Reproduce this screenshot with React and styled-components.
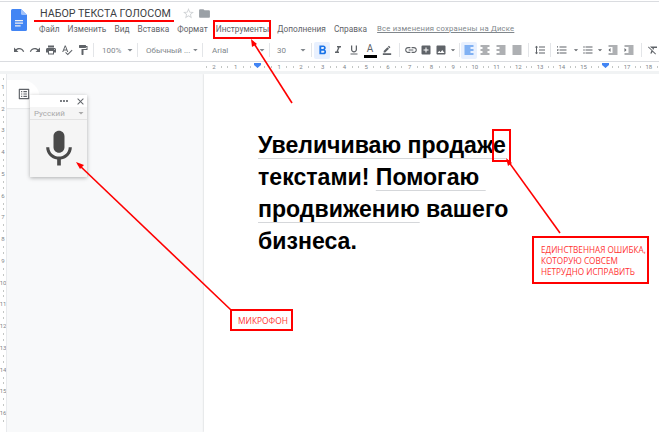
import React from 'react';
import styled, { createGlobalStyle } from 'styled-components';
import {
  MdUndo, MdRedo, MdPrint, MdSpellcheck, MdFormatPaint, MdFormatBold, MdFormatItalic,
  MdFormatUnderlined, MdBorderColor, MdLink, MdAddBox, MdImage, MdFormatAlignLeft,
  MdFormatAlignCenter, MdFormatAlignRight, MdFormatAlignJustify, MdFormatLineSpacing,
  MdFormatListNumbered, MdFormatListBulleted, MdFormatIndentDecrease, MdFormatIndentIncrease,
  MdFormatClear, MdStarBorder, MdFolder, MdMic, MdClose, MdMoreHoriz, MdArrowDropDown,
  MdOutlineListAlt,
} from 'react-icons/md';

const GlobalStyle = createGlobalStyle`
  html, body {
    margin: 0;
    padding: 0;
    background: #fff;
    overflow: hidden;
  }
`;

const Page = styled.div`
  position: relative;
  width: 659px;
  height: 432px;
  overflow: hidden;
  display: flex;
  flex-direction: column;
  font-family: Roboto, "Liberation Sans", sans-serif;
  color: #3c4043;
`;

const Header = styled.header`
  height: 38px;
  flex: none;
  display: flex;
  margin-top: 1px;
  border-top: 1px solid #dadce0;
  box-sizing: border-box;
`;

const LogoBox = styled.div`
  width: 39px;
  flex: none;
  padding: 7px 0 0 11px;
  box-sizing: border-box;
`;

const HeaderMain = styled.div`
  display: flex;
  flex-direction: column;
`;

const TitleRow = styled.div`
  display: flex;
  align-items: center;
  height: 20px;
  padding: 3px 0 0 1px;
  box-sizing: border-box;
  color: #d0d3d6;
`;

const Title = styled.span`
  font-size: 10.7px;
  color: #3c4043;
  width: 142px;
  white-space: nowrap;
`;

const MenuRow = styled.nav`
  display: flex;
  align-items: center;
  gap: 8.1px;
  height: 13px;
  font-size: 8.3px;
  color: #5f6368;
  white-space: nowrap;
`;

const SaveStatus = styled.span`
  margin-left: 2px;
  font-size: 7.7px;
  letter-spacing: 0.2px;
  color: #80868b;
  text-decoration: underline;
`;

const Toolbar = styled.div`
  height: 23px;
  flex: none;
  display: flex;
  align-items: center;
  padding-left: 11px;
  color: #5f6368;
  border-bottom: 1px solid #dadce0;
  box-sizing: border-box;
`;

const ToolCell = styled.div`
  width: ${(p) => p.$w}px;
  height: 17px;
  flex: none;
  display: flex;
  align-items: center;
  justify-content: center;
  border-radius: 2px;
  background: ${(p) => (p.$active ? '#e8f0fe' : 'transparent')};
  color: ${(p) => (p.$active ? '#1a73e8' : 'inherit')};
`;

const ToolSep = styled.div`
  width: 1px;
  height: 14px;
  flex: none;
  margin: 0 ${(p) => p.$gap || 4}px;
  background: #e3e5e8;
`;

const ToolText = styled.div`
  width: ${(p) => p.$w}px;
  flex: none;
  display: flex;
  align-items: center;
  justify-content: space-between;
  padding-left: ${(p) => p.$pad || 0}px;
  box-sizing: border-box;
  font-size: 8px;
  color: #80868b;
  white-space: nowrap;
`;

const ColorA = styled.div`
  width: 16px;
  flex: none;
  display: flex;
  flex-direction: column;
  align-items: center;
  font-size: 10px;
  line-height: 10px;
  margin-top: 1px;
  color: #5f6368;
  &::after {
    content: '';
    width: 13px;
    height: 3px;
    margin-top: 1px;
    background: #000;
  }
`;

const HRuler = styled.div`
  height: 12px;
  flex: none;
  display: flex;
  align-items: center;
  padding-left: 203px;
  background: linear-gradient(#fff 0 9px, #f1f3f4 9px);
  font-size: 6px;
  color: #80868b;
  position: relative;
`;

const RulerCell = styled.div`
  width: 21.75px;
  height: 9px;
  margin-bottom: 3px;
  flex: none;
  display: flex;
  align-items: center;
  justify-content: space-around;
  color: #80868b;
`;

const RulerTick = styled.i`
  width: 1px;
  height: 2px;
  background: #c4c7c5;
`;

const IndentMark = styled.div`
  position: absolute;
  top: 1px;
  left: ${(p) => p.$x}px;
  width: 7px;
  height: 5px;
  background: #4285f4;
  clip-path: polygon(0 0, 100% 0, 100% 40%, 50% 100%, 0 40%);
`;

const Workspace = styled.div`
  flex: 1;
  min-height: 0;
  display: flex;
  background: #f8f9fa;
`;

const VRuler = styled.div`
  width: 6px;
  flex: none;
  background: #fff;
  border-right: 1px solid #e8eaed;
  overflow: hidden;
  font-size: 6px;
  color: #80868b;
`;

const VRulerCell = styled.div`
  height: 21.75px;
  display: flex;
  flex-direction: column;
  align-items: center;
  justify-content: space-around;
  line-height: 6px;
  &:first-child {
    margin-top: 2px;
  }
  b {
    font-weight: 400;
  }
`;

const LeftPane = styled.div`
  width: 197px;
  flex: none;
  padding-top: 6px;
  position: relative;
`;

const OutlineTab = styled.div`
  width: 33px;
  height: 28px;
  background: #fff;
  border-radius: 0 18px 0 0;
  box-shadow: 0 1px 1px rgba(60, 64, 67, 0.08);
  display: flex;
  align-items: center;
  justify-content: center;
  color: #5f6368;
`;

const MicWidget = styled.aside`
  position: absolute;
  left: 23px;
  top: 21px;
  width: 57px;
  height: 82px;
  background: #f5f5f5;
  box-shadow: 0 1px 4px rgba(0, 0, 0, 0.3);
  display: flex;
  flex-direction: column;
`;

const MicHeader = styled.div`
  height: 12px;
  background: #fff;
  display: flex;
  align-items: center;
  justify-content: flex-end;
  gap: 5px;
  padding-right: 1px;
  color: #5f6368;
`;

const MicLang = styled.div`
  height: 12px;
  display: flex;
  align-items: center;
  justify-content: space-between;
  padding-left: 4px;
  font-size: 8px;
  color: #a9a9a9;
  border-bottom: 1px solid #e3e3e3;
`;

const MicBody = styled.div`
  flex: 1;
  display: flex;
  align-items: center;
  justify-content: center;
  color: #4a4a4a;
`;

const Sheet = styled.main`
  flex: 1;
  background: #fff;
  box-shadow: 0 0 2px rgba(60, 64, 67, 0.25);
  padding: 55px 0 0 54px;
  font-family: "Liberation Sans", Arial, sans-serif;
  font-weight: 700;
  font-size: 23.1px;
  line-height: 32px;
  color: #000;
`;

const DocLine = styled.div`
  white-space: nowrap;
`;

const Marked = styled.span`
  text-decoration: underline;
  text-decoration-color: #d5d7da;
  text-decoration-thickness: 1px;
  text-underline-offset: 5px;
  text-decoration-skip-ink: none;
`;

const Arrows = styled.svg`
  position: absolute;
  left: 0;
  top: 0;
  pointer-events: none;
`;

const TitleUnderline = styled.div`
  position: absolute;
  left: 34px;
  top: 20px;
  width: 140px;
  height: 2px;
  background: #f00;
`;

const MenuHighlight = styled.div`
  position: absolute;
  left: 213px;
  top: 20px;
  width: 58px;
  height: 19px;
  box-sizing: border-box;
  border: 2px solid #f00;
`;

const LetterHighlight = styled.div`
  position: absolute;
  left: 492px;
  top: 129px;
  width: 19px;
  height: 33px;
  box-sizing: border-box;
  border: 2px solid #f00;
`;

const Note = styled.div`
  position: absolute;
  box-sizing: border-box;
  background: #fff;
  border: 2px solid #f00;
  color: #f33;
  font-family: "Open Sans", "Liberation Sans", sans-serif;
  white-space: nowrap;
`;

const ErrorNote = styled(Note)`
  left: 532px;
  top: 236px;
  width: 117px;
  height: 48px;
  padding: 6px 0 0 7px;
  font-size: 8.2px;
  line-height: 11px;
`;

const MicNote = styled(Note)`
  left: 230px;
  top: 309px;
  width: 63px;
  height: 22px;
  padding-left: 6px;
  display: flex;
  align-items: center;
  font-size: 8.4px;
`;

const DocsLogo = () => (
  <svg width="16" height="22" viewBox="0 0 16 22">
    <path d="M1.5 0H10l6 6v14.5a1.5 1.5 0 0 1-1.5 1.5h-13A1.5 1.5 0 0 1 0 20.5v-19A1.5 1.5 0 0 1 1.5 0z" fill="#4285f4" />
    <path d="M10 0l6 6h-4.5A1.5 1.5 0 0 1 10 4.5z" fill="#a1c2fa" />
    <path d="M4 11h8v1.2H4zM4 13.6h8v1.2H4zM4 16.2h5.6v1.2H4z" fill="#f1f1f1" />
  </svg>
);

const menuItems = ['Файл', 'Изменить', 'Вид', 'Вставка', 'Формат', 'Инструменты', 'Дополнения', 'Справка'];

const Tool = ({ icon: Icon, w = 16, size = 12, active }) => (
  <ToolCell $w={w} $active={active}><Icon size={size} /></ToolCell>
);

const hRuler = [2, 1, null, 1, 2, 3, 4, 5, 6, 7, 8, 9, 10, 11, 12, 13, 14, 15, null, 17, 18];

export default function App() {
  return (
    <Page>
      <GlobalStyle />
      <Header>
        <LogoBox><DocsLogo /></LogoBox>
        <HeaderMain>
          <TitleRow>
            <Title>НАБОР ТЕКСТА ГОЛОСОМ</Title>
            <MdStarBorder size={13} />
            <MdFolder size={13} style={{ marginLeft: 3, color: '#9aa0a6' }} />
          </TitleRow>
          <MenuRow>
            {menuItems.map((m) => <span key={m}>{m}</span>)}
            <SaveStatus>Все изменения сохранены на Диске</SaveStatus>
          </MenuRow>
        </HeaderMain>
      </Header>

      <Toolbar>
        <Tool icon={MdUndo} />
        <Tool icon={MdRedo} />
        <Tool icon={MdPrint} />
        <Tool icon={MdSpellcheck} />
        <Tool icon={MdFormatPaint} />
        <ToolSep $gap={2} />
        <ToolText $w={40} $pad={6}>100% <MdArrowDropDown size={12} /></ToolText>
        <ToolSep $gap={1} />
        <ToolText $w={62} $pad={7}>Обычный ... <MdArrowDropDown size={12} /></ToolText>
        <ToolSep $gap={1} />
        <ToolText $w={64} $pad={8}>Arial <MdArrowDropDown size={12} /></ToolText>
        <ToolSep $gap={1} />
        <ToolText $w={38} $pad={6}>30 <MdArrowDropDown size={12} /></ToolText>
        <ToolSep $gap={2} />
        <Tool icon={MdFormatBold} active size={15} />
        <Tool icon={MdFormatItalic} />
        <Tool icon={MdFormatUnderlined} />
        <ColorA>A</ColorA>
        <Tool icon={MdBorderColor} w={18} size={10} />
        <ToolSep $gap={3} />
        <Tool icon={MdLink} w={15} size={14} />
        <Tool icon={MdAddBox} />
        <Tool icon={MdImage} w={14} />
        <MdArrowDropDown size={10} />
        <ToolSep $gap={1} />
        <Tool icon={MdFormatAlignLeft} active />
        <Tool icon={MdFormatAlignCenter} />
        <Tool icon={MdFormatAlignRight} />
        <Tool icon={MdFormatAlignJustify} />
        <ToolSep $gap={3} />
        <Tool icon={MdFormatLineSpacing} />
        <ToolSep $gap={2} />
        <Tool icon={MdFormatListNumbered} w={18} />
        <MdArrowDropDown size={10} />
        <Tool icon={MdFormatListBulleted} w={14} />
        <MdArrowDropDown size={10} />
        <Tool icon={MdFormatIndentDecrease} />
        <Tool icon={MdFormatIndentIncrease} />
        <ToolSep $gap={4} />
        <Tool icon={MdFormatClear} w={13} />
      </Toolbar>

      <HRuler>
        {hRuler.map((n, i) => (
          <RulerCell key={i}>
            <RulerTick />
            {n === null ? <RulerTick /> : <span>{n}</span>}
            <RulerTick />
          </RulerCell>
        ))}
        <IndentMark $x={254} />
        <IndentMark $x={602} />
      </HRuler>

      <Workspace>
        <VRuler>
          {Array.from({ length: 16 }, (_, i) => (
            <VRulerCell key={i}>
              <RulerTick />
              <b>{i + 1}</b>
              <RulerTick />
            </VRulerCell>
          ))}
        </VRuler>
        <LeftPane>
          <OutlineTab><MdOutlineListAlt size={14} /></OutlineTab>
          <MicWidget>
            <MicHeader>
              <MdMoreHoriz size={12} />
              <MdClose size={11} />
            </MicHeader>
            <MicLang>Русский <MdArrowDropDown size={12} /></MicLang>
            <MicBody><MdMic size={44} /></MicBody>
          </MicWidget>
        </LeftPane>
        <Sheet>
          <DocLine><Marked>Увеличиваю продаже</Marked></DocLine>
          <DocLine>текстами! <Marked>Помогаю&nbsp;</Marked></DocLine>
          <DocLine><Marked>продвижению</Marked> вашего</DocLine>
          <DocLine>бизнеса.</DocLine>
        </Sheet>
      </Workspace>

      <Arrows width="659" height="432" viewBox="0 0 659 432">
        <g stroke="#f00" strokeWidth="1.6" fill="none">
          <path d="M292 103L253 42" />
          <path d="M560 233L508 161" />
          <path d="M231 310L79 165" />
        </g>
        <g fill="#f00">
          <path d="M251 39l6 5-5 3z" />
          <path d="M506 158l6 5-4 3z" />
          <path d="M76 162l8 3-4 4z" />
        </g>
      </Arrows>
      <TitleUnderline />
      <MenuHighlight />
      <LetterHighlight />
      <ErrorNote>
        ЕДИНСТВЕННАЯ ОШИБКА,<br />
        КОТОРУЮ СОВСЕМ<br />
        НЕТРУДНО ИСПРАВИТЬ
      </ErrorNote>
      <MicNote>МИКРОФОН</MicNote>
    </Page>
  );
}
